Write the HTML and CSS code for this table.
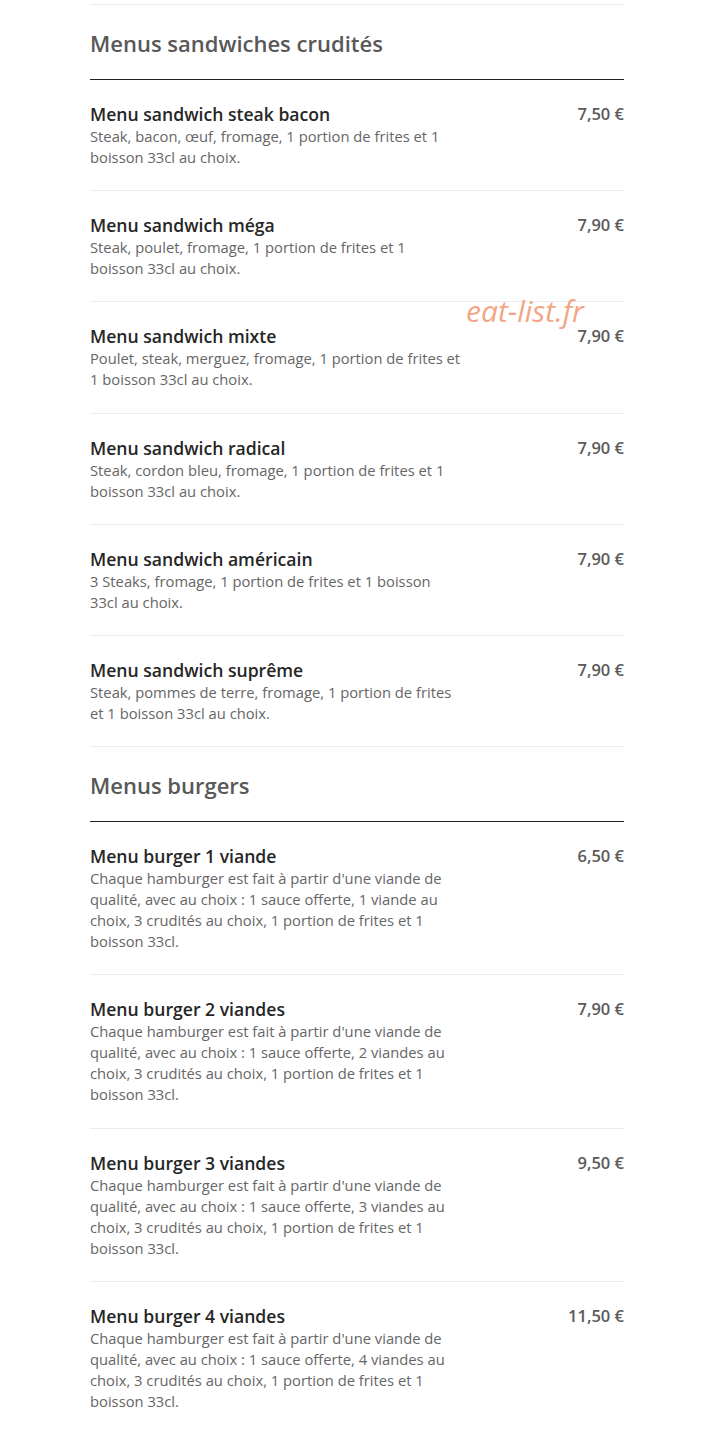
FILE: index.html
```html
<!DOCTYPE html>
<html lang="fr">
<head>
  <meta charset="UTF-8" />
  <meta name="viewport" content="width=device-width, initial-scale=1.0"/>
  <title>Menus</title>
  <link rel="stylesheet" href="styles.css">
</head>
<body>
  <div class="menu">
    <div class="section">
      <h2 class="section-title">Menus sandwiches crudités</h2>

      <div class="item">
        <div class="info">
          <div class="name">Menu sandwich steak bacon</div>
          <div class="desc">Steak, bacon, œuf, fromage, 1 portion de frites et 1 boisson 33cl au choix.</div>
        </div>
        <div class="price">7,50 €</div>
      </div>

      <div class="item">
        <div class="info">
          <div class="name">Menu sandwich méga</div>
          <div class="desc">Steak, poulet, fromage, 1 portion de frites et 1 boisson 33cl au choix.</div>
        </div>
        <div class="price">7,90 €</div>
      </div>

      <div class="item">
        <div class="info">
          <div class="name">Menu sandwich mixte</div>
          <div class="desc">Poulet, steak, merguez, fromage, 1 portion de frites et 1 boisson 33cl au choix.</div>
        </div>
        <div class="price">7,90 €</div>
        <span class="watermark">eat-list.fr</span>
      </div>

      <div class="item">
        <div class="info">
          <div class="name">Menu sandwich radical</div>
          <div class="desc">Steak, cordon bleu, fromage, 1 portion de frites et 1 boisson 33cl au choix.</div>
        </div>
        <div class="price">7,90 €</div>
      </div>

      <div class="item">
        <div class="info">
          <div class="name">Menu sandwich américain</div>
          <div class="desc">3 Steaks, fromage, 1 portion de frites et 1 boisson 33cl au choix.</div>
        </div>
        <div class="price">7,90 €</div>
      </div>

      <div class="item">
        <div class="info">
          <div class="name">Menu sandwich suprême</div>
          <div class="desc">Steak, pommes de terre, fromage, 1 portion de frites et 1 boisson 33cl au choix.</div>
        </div>
        <div class="price">7,90 €</div>
      </div>
    </div>

    <div class="section">
      <h2 class="section-title">Menus burgers</h2>

      <div class="item">
        <div class="info">
          <div class="name">Menu burger 1 viande</div>
          <div class="desc">Chaque hamburger est fait à partir d'une viande de qualité, avec au choix : 1 sauce offerte, 1 viande au choix, 3 crudités au choix, 1 portion de frites et 1 boisson 33cl.</div>
        </div>
        <div class="price">6,50 €</div>
      </div>

      <div class="item">
        <div class="info">
          <div class="name">Menu burger 2 viandes</div>
          <div class="desc">Chaque hamburger est fait à partir d'une viande de qualité, avec au choix : 1 sauce offerte, 2 viandes au choix, 3 crudités au choix, 1 portion de frites et 1 boisson 33cl.</div>
        </div>
        <div class="price">7,90 €</div>
      </div>

      <div class="item">
        <div class="info">
          <div class="name">Menu burger 3 viandes</div>
          <div class="desc">Chaque hamburger est fait à partir d'une viande de qualité, avec au choix : 1 sauce offerte, 3 viandes au choix, 3 crudités au choix, 1 portion de frites et 1 boisson 33cl.</div>
        </div>
        <div class="price">9,50 €</div>
      </div>

      <div class="item">
        <div class="info">
          <div class="name">Menu burger 4 viandes</div>
          <div class="desc">Chaque hamburger est fait à partir d'une viande de qualité, avec au choix : 1 sauce offerte, 4 viandes au choix, 3 crudités au choix, 1 portion de frites et 1 boisson 33cl.</div>
        </div>
        <div class="price">11,50 €</div>
      </div>
    </div>
  </div>
</body>
</html>
```

FILE: styles.css
```css
body {
  font-family: 'Open Sans', 'Liberation Sans', sans-serif;
  background: #ffffff;
  margin: 0;
  color: #222;
}
.menu {
  width: 534px;
  margin-left: 90px;
  padding-top: 4px;
}
.section:first-child {
  border-top: 1px solid #ececec;
}
.section-title {
  margin: 23px 0 0;
  padding-bottom: 21px;
  border-bottom: 1px solid #222;
  font-size: 22px;
  line-height: 30px;
  font-weight: 600;
  color: #585858;
}
.item {
  position: relative;
  display: flex;
  justify-content: space-between;
  padding: 22.1px 0 22.1px;
  border-bottom: 1px solid #ececec;
}
.info {
  width: 372px;
}
.name {
  font-size: 17.6px;
  line-height: 24px;
  font-weight: 600;
  color: #262626;
}
.desc {
  font-size: 14.75px;
  line-height: 21px;
  color: #666;
}
.price {
  font-size: 16.5px;
  line-height: 24px;
  font-weight: 600;
  color: #5a5a5a;
}
.watermark {
  position: absolute;
  left: 376px;
  top: -12px;
  font-size: 30px;
  font-style: italic;
  color: #f3a686;
}
```
